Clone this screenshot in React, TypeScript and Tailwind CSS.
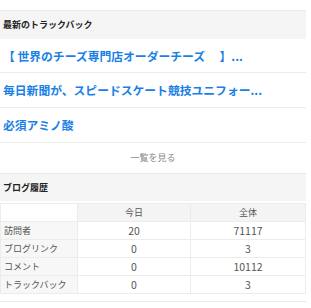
const trackbacks = [
  '【 世界のチーズ専門店オーダーチーズ　 】...',
  '毎日新聞が、スピードスケート競技ユニフォー...',
  '必須アミノ酸',
];

const stats = [
  { label: '訪問者', today: '20', total: '71117' },
  { label: 'ブログリンク', today: '0', total: '3' },
  { label: 'コメント', today: '0', total: '10112' },
  { label: 'トラックバック', today: '0', total: '3' },
];

export default function App() {
  return (
    <div className="w-[311px] h-[308px] bg-white font-['Noto_Sans_CJK_JP',sans-serif] overflow-hidden">
      <div className="w-[306px] pt-[10px]">
        {/* recent trackbacks */}
        <div className="h-[29px] border-t border-[#eaeaea] bg-[#f5f5f5] flex items-center px-[3px]">
          <h2 className="text-[9px] font-bold text-[#222]">最新のトラックバック</h2>
        </div>
        {trackbacks.map((t, i) => (
          <a
            key={i}
            href="#"
            className={`flex items-center px-[3px] border-b border-[#ececec] text-[11.8px] font-bold text-[#1a80e5] whitespace-pre ${i === 0 ? 'h-[34px]' : 'h-[35px]'}`}
          >
            {t}
          </a>
        ))}
        <div className="h-[30px] flex items-center justify-center text-[9px] text-[#888]">一覧を見る</div>

        {/* blog history */}
        <div className="h-[28px] border-t border-[#eaeaea] bg-[#f5f5f5] flex items-center px-[3px]">
          <h2 className="text-[9px] font-bold text-[#222]">ブログ履歴</h2>
        </div>
        <table className="mt-[2px] w-full border-collapse text-[9px] text-[#555]">
          <thead>
            <tr className="h-[18px]">
              <th className="w-[77px] border border-[#ececec] bg-white"></th>
              <th className="w-[113px] border border-[#ececec] bg-[#f4f4f4] font-normal text-center">今日</th>
              <th className="border border-[#ececec] bg-[#f4f4f4] font-normal text-center">全体</th>
            </tr>
          </thead>
          <tbody>
            {stats.map((s) => (
              <tr key={s.label} className="h-[18px]">
                <td className="border border-[#ececec] bg-[#f7f7f7] px-[3px] text-left">{s.label}</td>
                <td className="border border-[#ececec] text-center text-[10.5px]">{s.today}</td>
                <td className="border border-[#ececec] text-center text-[10.5px]">{s.total}</td>
              </tr>
            ))}
          </tbody>
        </table>
        <div className="mt-[7px] border-t border-[#eaeaea]"></div>
      </div>
    </div>
  );
}
